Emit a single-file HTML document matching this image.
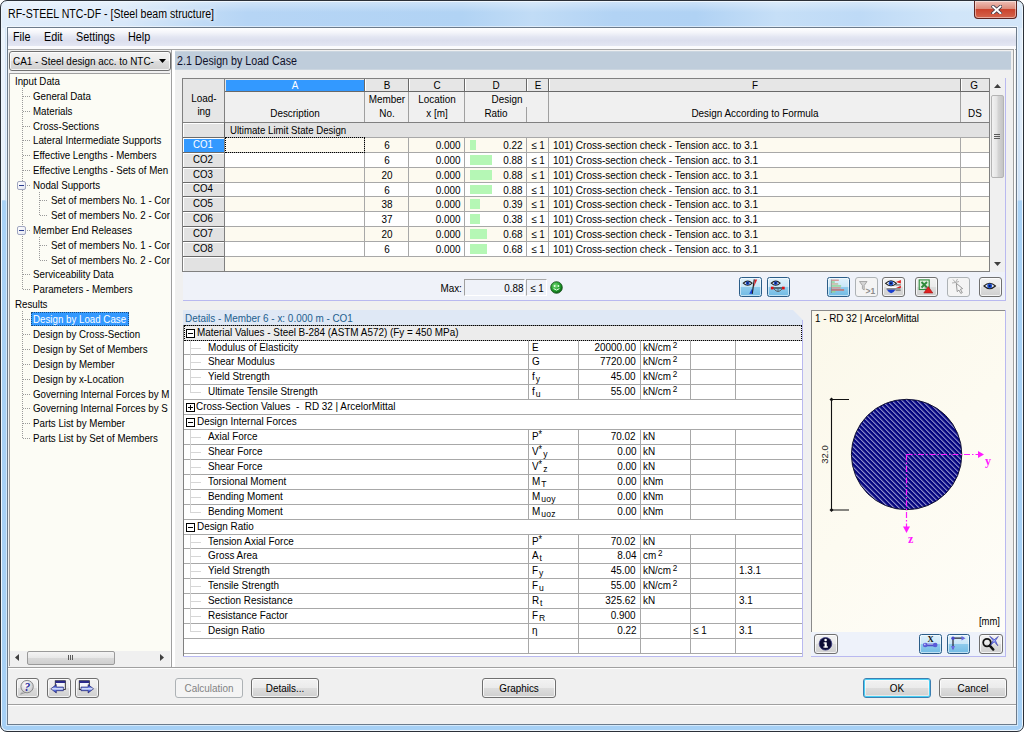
<!DOCTYPE html>
<html><head><meta charset="utf-8"><title>RF-STEEL NTC-DF</title>
<style>
html,body{margin:0;padding:0;background:#fff;}
body{width:1024px;height:732px;overflow:hidden;position:relative;font-family:"Liberation Sans",sans-serif;font-size:11px;color:#000;}
.t{position:absolute;white-space:nowrap;line-height:14px;height:14px;font-size:11px;display:block;}
.ui{font-size:12px;}
.w{color:#fff;}
.dis{color:#838383;}
.btn{position:absolute;box-sizing:border-box;border:1px solid #707070;border-radius:3px;background:linear-gradient(#f2f2f2 0%,#ebebeb 48%,#dddddd 52%,#cfcfcf 100%);box-shadow:inset 0 0 0 1px rgba(255,255,255,.75);}
.btnb{position:absolute;box-sizing:border-box;border:1px solid #2b5d88;border-radius:2.5px;background:linear-gradient(#dff1fb 0%,#c9e6f7 48%,#8fcbec 52%,#72bbe4 100%);box-shadow:inset 0 0 0 1px rgba(255,255,255,.55);}
.def{border-color:#3c7fb1;box-shadow:inset 0 0 0 1px #48d0f6, inset 0 0 0 2px rgba(255,255,255,.5);}
.btnd{position:absolute;box-sizing:border-box;border:1px solid #adb2b5;border-radius:3px;background:#f4f4f4;}
.hl{position:absolute;height:1px;background:#a0a0a0;}
.vl{position:absolute;width:1px;background:#a0a0a0;}
sub,sup{font-size:9.5px;line-height:0;margin-left:1px;letter-spacing:.3px;}sub{vertical-align:-2px;}sup{vertical-align:3px;font-size:9px;margin-left:2px;}sup.st{margin-left:0;font-size:10px;vertical-align:2px;}
</style></head><body>

<div class="" style="position:absolute;left:0px;top:0px;width:1024px;height:732px;box-sizing:border-box;border:1px solid #2b3038;border-radius:7px;background:linear-gradient(180deg,#d6e7f9 0px,#cfe2f7 199px,#a9d2f6 200px,#a6d0f5 100%);box-shadow:inset 0 0 0 1px #eef6fd;overflow:hidden;"><div style="position:absolute;left:1px;top:1px;width:1020px;height:26px;border-radius:6px 6px 0 0;background:linear-gradient(90deg,#e2eefb 0%,#d8e8f9 12%,#c2dcf6 19%,#b6d5f5 24%,#b1d3f4 45%,#c1dcf6 52%,#b2d3f4 60%,#b0d2f4 68%,#c6dff7 76%,#bedaf6 84%,#d0e5f9 93%,#d3e6f9 100%)"></div><div style="position:absolute;left:1px;top:1px;width:1020px;height:26px;border-radius:6px 6px 0 0;background:linear-gradient(180deg,rgba(255,255,255,.35) 0,rgba(255,255,255,0) 40%,rgba(255,255,255,0) 100%)"></div><div style="position:absolute;left:1px;top:27px;width:3px;height:172px;background:rgba(255,255,255,.55)"></div><div style="position:absolute;left:1019px;top:27px;width:3px;height:172px;background:rgba(255,255,255,.3)"></div></div>
<div class="" style="position:absolute;left:7px;top:27px;width:1010px;height:698px;box-sizing:border-box;border:1px solid #6c7b8b;background:#f0f0f0;box-shadow:0 0 0 1px rgba(255,255,255,.5);"></div>
<span class="t ui" style="left:8px;transform-origin:0 50%;top:7px;transform:scaleX(0.882);text-shadow:0 0 7px rgba(255,255,255,.9),0 0 4px rgba(255,255,255,.8);">RF-STEEL NTC-DF - [Steel beam structure]</span>
<div class="" style="position:absolute;left:974px;top:1px;width:43px;height:18px;box-sizing:border-box;border:1px solid #5c2320;border-top:none;border-radius:0 0 4px 4px;background:linear-gradient(#efc0b7 0%,#dc8c7c 45%,#cb432d 50%,#d4654d 100%);box-shadow:inset 0 0 0 1px rgba(255,255,255,.45);"></div>
<svg style="position:absolute;left:990.5px;top:4.5px" width="11.5" height="9.8" viewBox="0 0 14 12"><path d="M2.5 2 L11.5 10 M11.5 2 L2.5 10" stroke="#3a3a4a" stroke-width="4.2" stroke-linecap="square"/><path d="M2.5 2 L11.5 10 M11.5 2 L2.5 10" stroke="#fff" stroke-width="2.4" stroke-linecap="square"/></svg>
<div class="" style="position:absolute;left:8px;top:28px;width:1008px;height:18px;background:linear-gradient(#ffffff 0%,#f4f5fa 25%,#e3e6f2 50%,#dcdfee 70%,#e4e7f3 100%);"></div>
<div class="" style="position:absolute;left:8px;top:46px;width:1008px;height:3px;background:#fbfbfd;"></div>
<div class="" style="position:absolute;left:8px;top:49px;width:1008px;height:1px;background:#a5a5a5;"></div>
<span class="t ui" style="left:13px;transform-origin:0 50%;top:30px;transform:scaleX(0.9);">File</span>
<span class="t ui" style="left:44px;transform-origin:0 50%;top:30px;transform:scaleX(0.9);">Edit</span>
<span class="t ui" style="left:76px;transform-origin:0 50%;top:30px;transform:scaleX(0.9);">Settings</span>
<span class="t ui" style="left:128px;transform-origin:0 50%;top:30px;transform:scaleX(0.9);">Help</span>
<div class="" style="position:absolute;left:9px;top:51px;width:162px;height:20px;box-sizing:border-box;border:1px solid #707070;border-radius:3px;background:linear-gradient(#f2f2f2 0%,#ebebeb 48%,#dddddd 52%,#cfcfcf 100%);box-shadow:inset 0 0 0 1px rgba(255,255,255,.75);"></div>
<span class="t " style="left:13px;transform-origin:0 50%;top:54px;transform:scaleX(0.9);">CA1 - Steel design acc. to NTC-</span>
<svg style="position:absolute;left:159px;top:59px" width="8" height="5"><path d="M0 0 L7 0 L3.5 4 Z" fill="#000"/></svg>
<div class="" style="position:absolute;left:9px;top:73px;width:161px;height:593px;box-sizing:border-box;border-top:1px solid #a0a0a0;border-left:1px solid #a0a0a0;background:#fcfcf5;"></div>
<div class="" style="position:absolute;left:170px;top:73px;width:1px;height:593px;background:#fafafa;"></div>
<div style="position:absolute;left:10px;top:74px;width:160px;height:576px;overflow:hidden">
<div class="" style="position:absolute;left:12px;top:14px;width:1px;height:202px;background-image:linear-gradient(#9a9a9a 50%,transparent 50%);background-size:1px 2px;"></div>
<div class="" style="position:absolute;left:12px;top:237px;width:1px;height:128px;background-image:linear-gradient(#9a9a9a 50%,transparent 50%);background-size:1px 2px;"></div>
<div class="" style="position:absolute;left:29px;top:118px;width:1px;height:24px;background-image:linear-gradient(#9a9a9a 50%,transparent 50%);background-size:1px 2px;"></div>
<div class="" style="position:absolute;left:29px;top:163px;width:1px;height:24px;background-image:linear-gradient(#9a9a9a 50%,transparent 50%);background-size:1px 2px;"></div>
<span class="t" style="left:5px;top:-0.09999999999999432px;transform-origin:0 50%;transform:scaleX(0.885)">Input Data</span>
<div class="" style="position:absolute;left:13px;top:22px;width:8px;height:1px;background-image:linear-gradient(90deg,#9a9a9a 50%,transparent 50%);background-size:2px 1px;"></div>
<span class="t" style="left:23px;top:14.790000000000006px;transform-origin:0 50%;transform:scaleX(0.885)">General Data</span>
<div class="" style="position:absolute;left:13px;top:37px;width:8px;height:1px;background-image:linear-gradient(90deg,#9a9a9a 50%,transparent 50%);background-size:2px 1px;"></div>
<span class="t" style="left:23px;top:29.680000000000007px;transform-origin:0 50%;transform:scaleX(0.885)">Materials</span>
<div class="" style="position:absolute;left:13px;top:52px;width:8px;height:1px;background-image:linear-gradient(90deg,#9a9a9a 50%,transparent 50%);background-size:2px 1px;"></div>
<span class="t" style="left:23px;top:44.57000000000001px;transform-origin:0 50%;transform:scaleX(0.885)">Cross-Sections</span>
<div class="" style="position:absolute;left:13px;top:66px;width:8px;height:1px;background-image:linear-gradient(90deg,#9a9a9a 50%,transparent 50%);background-size:2px 1px;"></div>
<span class="t" style="left:23px;top:59.46000000000001px;transform-origin:0 50%;transform:scaleX(0.885)">Lateral Intermediate Supports</span>
<div class="" style="position:absolute;left:13px;top:81px;width:8px;height:1px;background-image:linear-gradient(90deg,#9a9a9a 50%,transparent 50%);background-size:2px 1px;"></div>
<span class="t" style="left:23px;top:74.35000000000002px;transform-origin:0 50%;transform:scaleX(0.885)">Effective Lengths - Members</span>
<div class="" style="position:absolute;left:13px;top:96px;width:8px;height:1px;background-image:linear-gradient(90deg,#9a9a9a 50%,transparent 50%);background-size:2px 1px;"></div>
<span class="t" style="left:23px;top:89.24000000000001px;transform-origin:0 50%;transform:scaleX(0.885)">Effective Lengths - Sets of Men</span>
<div class="" style="position:absolute;left:13px;top:111px;width:8px;height:1px;background-image:linear-gradient(90deg,#9a9a9a 50%,transparent 50%);background-size:2px 1px;"></div>
<span class="t" style="left:23px;top:104.13px;transform-origin:0 50%;transform:scaleX(0.885)">Nodal Supports</span>
<div class="" style="position:absolute;left:7px;top:107px;width:9px;height:9px;box-sizing:border-box;border:1px solid #a0a6c0;background:linear-gradient(135deg,#fff,#e4e6f0);border-radius:2px;"><div style="position:absolute;left:1px;top:3px;width:5px;height:1px;background:#2a3d8f"></div></div>
<div class="" style="position:absolute;left:30px;top:126px;width:8px;height:1px;background-image:linear-gradient(90deg,#9a9a9a 50%,transparent 50%);background-size:2px 1px;"></div>
<span class="t" style="left:41px;top:119.02000000000001px;transform-origin:0 50%;transform:scaleX(0.885)">Set of members No. 1 - Cor</span>
<div class="" style="position:absolute;left:30px;top:141px;width:8px;height:1px;background-image:linear-gradient(90deg,#9a9a9a 50%,transparent 50%);background-size:2px 1px;"></div>
<span class="t" style="left:41px;top:133.91px;transform-origin:0 50%;transform:scaleX(0.885)">Set of members No. 2 - Cor</span>
<div class="" style="position:absolute;left:13px;top:156px;width:8px;height:1px;background-image:linear-gradient(90deg,#9a9a9a 50%,transparent 50%);background-size:2px 1px;"></div>
<span class="t" style="left:23px;top:148.8px;transform-origin:0 50%;transform:scaleX(0.885)">Member End Releases</span>
<div class="" style="position:absolute;left:7px;top:152px;width:9px;height:9px;box-sizing:border-box;border:1px solid #a0a6c0;background:linear-gradient(135deg,#fff,#e4e6f0);border-radius:2px;"><div style="position:absolute;left:1px;top:3px;width:5px;height:1px;background:#2a3d8f"></div></div>
<div class="" style="position:absolute;left:30px;top:171px;width:8px;height:1px;background-image:linear-gradient(90deg,#9a9a9a 50%,transparent 50%);background-size:2px 1px;"></div>
<span class="t" style="left:41px;top:163.69000000000003px;transform-origin:0 50%;transform:scaleX(0.885)">Set of members No. 1 - Cor</span>
<div class="" style="position:absolute;left:30px;top:186px;width:8px;height:1px;background-image:linear-gradient(90deg,#9a9a9a 50%,transparent 50%);background-size:2px 1px;"></div>
<span class="t" style="left:41px;top:178.58000000000004px;transform-origin:0 50%;transform:scaleX(0.885)">Set of members No. 2 - Cor</span>
<div class="" style="position:absolute;left:13px;top:200px;width:8px;height:1px;background-image:linear-gradient(90deg,#9a9a9a 50%,transparent 50%);background-size:2px 1px;"></div>
<span class="t" style="left:23px;top:193.47000000000003px;transform-origin:0 50%;transform:scaleX(0.885)">Serviceability Data</span>
<div class="" style="position:absolute;left:13px;top:215px;width:8px;height:1px;background-image:linear-gradient(90deg,#9a9a9a 50%,transparent 50%);background-size:2px 1px;"></div>
<span class="t" style="left:23px;top:208.36px;transform-origin:0 50%;transform:scaleX(0.885)">Parameters - Members</span>
<span class="t" style="left:5px;top:223.25px;transform-origin:0 50%;transform:scaleX(0.885)">Results</span>
<div class="" style="position:absolute;left:13px;top:245px;width:8px;height:1px;background-image:linear-gradient(90deg,#9a9a9a 50%,transparent 50%);background-size:2px 1px;"></div>
<div class="" style="position:absolute;left:21px;top:238px;width:98px;height:14px;box-sizing:border-box;background:#3399ff;border:1px dotted #1a4d80;"></div>
<span class="t w" style="left:23px;top:238.14px;transform-origin:0 50%;transform:scaleX(0.885)">Design by Load Case</span>
<div class="" style="position:absolute;left:13px;top:260px;width:8px;height:1px;background-image:linear-gradient(90deg,#9a9a9a 50%,transparent 50%);background-size:2px 1px;"></div>
<span class="t" style="left:23px;top:253.02999999999997px;transform-origin:0 50%;transform:scaleX(0.885)">Design by Cross-Section</span>
<div class="" style="position:absolute;left:13px;top:275px;width:8px;height:1px;background-image:linear-gradient(90deg,#9a9a9a 50%,transparent 50%);background-size:2px 1px;"></div>
<span class="t" style="left:23px;top:267.91999999999996px;transform-origin:0 50%;transform:scaleX(0.885)">Design by Set of Members</span>
<div class="" style="position:absolute;left:13px;top:290px;width:8px;height:1px;background-image:linear-gradient(90deg,#9a9a9a 50%,transparent 50%);background-size:2px 1px;"></div>
<span class="t" style="left:23px;top:282.81000000000006px;transform-origin:0 50%;transform:scaleX(0.885)">Design by Member</span>
<div class="" style="position:absolute;left:13px;top:305px;width:8px;height:1px;background-image:linear-gradient(90deg,#9a9a9a 50%,transparent 50%);background-size:2px 1px;"></div>
<span class="t" style="left:23px;top:297.70000000000005px;transform-origin:0 50%;transform:scaleX(0.885)">Design by x-Location</span>
<div class="" style="position:absolute;left:13px;top:320px;width:8px;height:1px;background-image:linear-gradient(90deg,#9a9a9a 50%,transparent 50%);background-size:2px 1px;"></div>
<span class="t" style="left:23px;top:312.59000000000003px;transform-origin:0 50%;transform:scaleX(0.885)">Governing Internal Forces by M</span>
<div class="" style="position:absolute;left:13px;top:334px;width:8px;height:1px;background-image:linear-gradient(90deg,#9a9a9a 50%,transparent 50%);background-size:2px 1px;"></div>
<span class="t" style="left:23px;top:327.48px;transform-origin:0 50%;transform:scaleX(0.885)">Governing Internal Forces by S</span>
<div class="" style="position:absolute;left:13px;top:349px;width:8px;height:1px;background-image:linear-gradient(90deg,#9a9a9a 50%,transparent 50%);background-size:2px 1px;"></div>
<span class="t" style="left:23px;top:342.37px;transform-origin:0 50%;transform:scaleX(0.885)">Parts List by Member</span>
<div class="" style="position:absolute;left:13px;top:364px;width:8px;height:1px;background-image:linear-gradient(90deg,#9a9a9a 50%,transparent 50%);background-size:2px 1px;"></div>
<span class="t" style="left:23px;top:357.26px;transform-origin:0 50%;transform:scaleX(0.885)">Parts List by Set of Members</span>
</div>
<div class="" style="position:absolute;left:10px;top:651px;width:160px;height:15px;background:#f0f0f0;"></div>
<div class="" style="position:absolute;left:27px;top:651px;width:88px;height:14px;box-sizing:border-box;border:1px solid #9a9a9a;border-radius:2px;background:linear-gradient(#f4f4f4 0%,#e8e8e8 48%,#d9d9d9 52%,#cfcfcf 100%);"></div>
<div class="" style="position:absolute;left:68px;top:655px;width:1px;height:5px;background:#5a5a5a;"></div>
<div class="" style="position:absolute;left:70px;top:655px;width:1px;height:5px;background:#5a5a5a;"></div>
<div class="" style="position:absolute;left:72px;top:655px;width:1px;height:5px;background:#5a5a5a;"></div>
<svg style="position:absolute;left:15px;top:654px" width="5" height="8"><path d="M4 0 L4 7 L0 3.5 Z" fill="#404040"/></svg>
<svg style="position:absolute;left:160px;top:654px" width="5" height="8"><path d="M0 0 L0 7 L4 3.5 Z" fill="#404040"/></svg>
<div class="" style="position:absolute;left:171px;top:50px;width:1px;height:617px;background:#a0a0a0;"></div>
<div class="" style="position:absolute;left:172px;top:50px;width:3px;height:617px;background:#ffffff;"></div>
<div class="" style="position:absolute;left:175px;top:51px;width:836px;height:19px;background:linear-gradient(180deg,rgba(191,205,219,.5) 0,#bfcddb 1px,#bfcddb 18px,rgba(191,205,219,.5) 100%);"></div>
<span class="t ui" style="left:177px;transform-origin:0 50%;top:53.5px;transform:scaleX(0.89);color:#10102a;">2.1 Design by Load Case</span>
<div class="" style="position:absolute;left:1013px;top:49px;width:1px;height:618px;background:#a0a0a0;"></div>
<div class="" style="position:absolute;left:1014px;top:49px;width:1px;height:618px;background:#fff;"></div>
<div class="" style="position:absolute;left:183px;top:78px;width:823px;height:222px;background:#eff2f9;"></div>
<div class="" style="position:absolute;left:183px;top:300px;width:823px;height:1px;background:#b9b9f0;"></div>
<div class="" style="position:absolute;left:1005px;top:78px;width:1px;height:223px;background:#b9b9f0;"></div>
<div class="" style="position:absolute;left:182px;top:78px;width:808px;height:194px;background:#808080;"></div>
<div class="" style="position:absolute;left:183px;top:79px;width:806px;height:12px;background:#e6e6e6;"></div>
<div class="" style="position:absolute;left:183px;top:91px;width:806px;height:1px;background:#696969;"></div>
<div class="" style="position:absolute;left:183px;top:92px;width:806px;height:30px;background:#f0f0f0;"></div>
<div class="" style="position:absolute;left:183px;top:79px;width:41px;height:43px;background:#e6e6e6;"></div>
<div class="" style="position:absolute;left:226px;top:80px;width:138px;height:11px;background:#3399ff;"></div>
<span class="t w" style="left:145.0px;width:300px;text-align:center;transform-origin:50% 50%;top:77.7px;transform:scaleX(0.9);">A</span>
<span class="t " style="left:237.0px;width:300px;text-align:center;transform-origin:50% 50%;top:77.7px;transform:scaleX(0.9);">B</span>
<div class="" style="position:absolute;left:364px;top:79px;width:1px;height:12px;background:#696969;"></div>
<div class="" style="position:absolute;left:365px;top:79px;width:1px;height:12px;background:#ffffff;"></div>
<span class="t " style="left:287.0px;width:300px;text-align:center;transform-origin:50% 50%;top:77.7px;transform:scaleX(0.9);">C</span>
<div class="" style="position:absolute;left:408px;top:79px;width:1px;height:12px;background:#696969;"></div>
<div class="" style="position:absolute;left:409px;top:79px;width:1px;height:12px;background:#ffffff;"></div>
<span class="t " style="left:346.0px;width:300px;text-align:center;transform-origin:50% 50%;top:77.7px;transform:scaleX(0.9);">D</span>
<div class="" style="position:absolute;left:464px;top:79px;width:1px;height:12px;background:#696969;"></div>
<div class="" style="position:absolute;left:465px;top:79px;width:1px;height:12px;background:#ffffff;"></div>
<span class="t " style="left:388.0px;width:300px;text-align:center;transform-origin:50% 50%;top:77.7px;transform:scaleX(0.9);">E</span>
<div class="" style="position:absolute;left:526px;top:79px;width:1px;height:12px;background:#696969;"></div>
<div class="" style="position:absolute;left:527px;top:79px;width:1px;height:12px;background:#ffffff;"></div>
<span class="t " style="left:605.0px;width:300px;text-align:center;transform-origin:50% 50%;top:77.7px;transform:scaleX(0.9);">F</span>
<div class="" style="position:absolute;left:548px;top:79px;width:1px;height:12px;background:#696969;"></div>
<div class="" style="position:absolute;left:549px;top:79px;width:1px;height:12px;background:#ffffff;"></div>
<span class="t " style="left:824.0px;width:300px;text-align:center;transform-origin:50% 50%;top:77.7px;transform:scaleX(0.9);">G</span>
<div class="" style="position:absolute;left:960px;top:79px;width:1px;height:12px;background:#696969;"></div>
<div class="" style="position:absolute;left:961px;top:79px;width:1px;height:12px;background:#ffffff;"></div>
<div class="" style="position:absolute;left:224px;top:79px;width:1px;height:43px;background:#808080;"></div>
<div class="" style="position:absolute;left:364px;top:92px;width:1px;height:30px;background:#a0a0a0;"></div>
<div class="" style="position:absolute;left:408px;top:92px;width:1px;height:30px;background:#a0a0a0;"></div>
<div class="" style="position:absolute;left:464px;top:92px;width:1px;height:30px;background:#a0a0a0;"></div>
<div class="" style="position:absolute;left:526px;top:107px;width:1px;height:15px;background:#a0a0a0;"></div>
<div class="" style="position:absolute;left:548px;top:92px;width:1px;height:30px;background:#a0a0a0;"></div>
<div class="" style="position:absolute;left:960px;top:92px;width:1px;height:30px;background:#a0a0a0;"></div>
<span class="t " style="left:54px;width:300px;text-align:center;transform-origin:50% 50%;top:91px;transform:scaleX(0.9);">Load-</span>
<span class="t " style="left:54px;width:300px;text-align:center;transform-origin:50% 50%;top:103.7px;transform:scaleX(0.9);">ing</span>
<span class="t " style="left:145px;width:300px;text-align:center;transform-origin:50% 50%;top:105.8px;transform:scaleX(0.9);">Description</span>
<span class="t " style="left:237px;width:300px;text-align:center;transform-origin:50% 50%;top:91.5px;transform:scaleX(0.9);">Member</span>
<span class="t " style="left:237px;width:300px;text-align:center;transform-origin:50% 50%;top:105.8px;transform:scaleX(0.9);">No.</span>
<span class="t " style="left:287px;width:300px;text-align:center;transform-origin:50% 50%;top:91.5px;transform:scaleX(0.9);">Location</span>
<span class="t " style="left:287px;width:300px;text-align:center;transform-origin:50% 50%;top:105.8px;transform:scaleX(0.9);">x [m]</span>
<span class="t " style="left:357px;width:300px;text-align:center;transform-origin:50% 50%;top:91.5px;transform:scaleX(0.9);">Design</span>
<span class="t " style="left:345.5px;width:300px;text-align:center;transform-origin:50% 50%;top:105.8px;transform:scaleX(0.9);">Ratio</span>
<span class="t " style="left:605px;width:300px;text-align:center;transform-origin:50% 50%;top:105.8px;transform:scaleX(0.9);">Design According to Formula</span>
<span class="t " style="left:825px;width:300px;text-align:center;transform-origin:50% 50%;top:105.8px;transform:scaleX(0.9);">DS</span>
<div class="" style="position:absolute;left:183px;top:122px;width:806px;height:1px;background:#808080;"></div>
<div class="" style="position:absolute;left:183px;top:123px;width:806px;height:14px;background:#e2e2e2;"></div>
<span class="t " style="left:229.5px;transform-origin:0 50%;top:123.0px;transform:scaleX(0.876);">Ultimate Limit State Design</span>
<div class="" style="position:absolute;left:183px;top:123px;width:41px;height:14px;background:#e2e2e2;box-sizing:border-box;border-top:1px solid #fff;border-left:1px solid #fff;"></div>
<div class="" style="position:absolute;left:224px;top:122px;width:1px;height:15px;background:#696969;"></div>
<div class="" style="position:absolute;left:225px;top:138px;width:764px;height:14px;background:#fdfaf0;"></div>
<div class="" style="position:absolute;left:225px;top:137px;width:764px;height:1px;background:#a8a8a8;"></div>
<div class="" style="position:absolute;left:183px;top:137px;width:41px;height:1px;background:#6a6a6a;"></div>
<div class="" style="position:absolute;left:183px;top:138px;width:41px;height:14px;background:#3399ff;box-sizing:border-box;border-top:1px solid #fff;border-left:1px solid #fff;"></div>
<div class="" style="position:absolute;left:364px;top:138px;width:1px;height:14px;background:#a8a8a8;"></div>
<div class="" style="position:absolute;left:408px;top:138px;width:1px;height:14px;background:#a8a8a8;"></div>
<div class="" style="position:absolute;left:464px;top:138px;width:1px;height:14px;background:#a8a8a8;"></div>
<div class="" style="position:absolute;left:526px;top:138px;width:1px;height:14px;background:#a8a8a8;"></div>
<div class="" style="position:absolute;left:548px;top:138px;width:1px;height:14px;background:#a8a8a8;"></div>
<div class="" style="position:absolute;left:960px;top:138px;width:1px;height:14px;background:#a8a8a8;"></div>
<span class="t w" style="left:52.69999999999999px;width:300px;text-align:center;transform-origin:50% 50%;top:136.9px;transform:scaleX(0.88);">CO1</span>
<span class="t " style="left:237px;width:300px;text-align:center;transform-origin:50% 50%;top:138.0px;transform:scaleX(0.9);">6</span>
<span class="t " style="right:563px;transform-origin:100% 50%;top:138.0px;transform:scaleX(0.9);">0.000</span>
<div class="" style="position:absolute;left:470px;top:140px;width:6px;height:10px;background:#b5f7b5;"></div>
<span class="t " style="right:502px;transform-origin:100% 50%;top:138.0px;transform:scaleX(0.9);">0.22</span>
<span class="t " style="left:388px;width:300px;text-align:center;transform-origin:50% 50%;top:138.0px;transform:scaleX(0.9);">≤ 1</span>
<span class="t " style="left:553px;transform-origin:0 50%;top:138.0px;transform:scaleX(0.91);">101) Cross-section check - Tension acc. to 3.1</span>
<div class="" style="position:absolute;left:225px;top:153px;width:764px;height:14px;background:#ffffff;"></div>
<div class="" style="position:absolute;left:225px;top:152px;width:764px;height:1px;background:#a8a8a8;"></div>
<div class="" style="position:absolute;left:183px;top:152px;width:41px;height:1px;background:#6a6a6a;"></div>
<div class="" style="position:absolute;left:183px;top:153px;width:41px;height:14px;background:#e2e2e2;box-sizing:border-box;border-top:1px solid #fff;border-left:1px solid #fff;"></div>
<div class="" style="position:absolute;left:364px;top:153px;width:1px;height:14px;background:#a8a8a8;"></div>
<div class="" style="position:absolute;left:408px;top:153px;width:1px;height:14px;background:#a8a8a8;"></div>
<div class="" style="position:absolute;left:464px;top:153px;width:1px;height:14px;background:#a8a8a8;"></div>
<div class="" style="position:absolute;left:526px;top:153px;width:1px;height:14px;background:#a8a8a8;"></div>
<div class="" style="position:absolute;left:548px;top:153px;width:1px;height:14px;background:#a8a8a8;"></div>
<div class="" style="position:absolute;left:960px;top:153px;width:1px;height:14px;background:#a8a8a8;"></div>
<span class="t " style="left:52.69999999999999px;width:300px;text-align:center;transform-origin:50% 50%;top:151.9px;transform:scaleX(0.88);">CO2</span>
<span class="t " style="left:237px;width:300px;text-align:center;transform-origin:50% 50%;top:153.0px;transform:scaleX(0.9);">6</span>
<span class="t " style="right:563px;transform-origin:100% 50%;top:153.0px;transform:scaleX(0.9);">0.000</span>
<div class="" style="position:absolute;left:470px;top:155px;width:22px;height:10px;background:#b5f7b5;"></div>
<span class="t " style="right:502px;transform-origin:100% 50%;top:153.0px;transform:scaleX(0.9);">0.88</span>
<span class="t " style="left:388px;width:300px;text-align:center;transform-origin:50% 50%;top:153.0px;transform:scaleX(0.9);">≤ 1</span>
<span class="t " style="left:553px;transform-origin:0 50%;top:153.0px;transform:scaleX(0.91);">101) Cross-section check - Tension acc. to 3.1</span>
<div class="" style="position:absolute;left:225px;top:168px;width:764px;height:14px;background:#fdfaf0;"></div>
<div class="" style="position:absolute;left:225px;top:167px;width:764px;height:1px;background:#a8a8a8;"></div>
<div class="" style="position:absolute;left:183px;top:167px;width:41px;height:1px;background:#6a6a6a;"></div>
<div class="" style="position:absolute;left:183px;top:168px;width:41px;height:14px;background:#e2e2e2;box-sizing:border-box;border-top:1px solid #fff;border-left:1px solid #fff;"></div>
<div class="" style="position:absolute;left:364px;top:168px;width:1px;height:14px;background:#a8a8a8;"></div>
<div class="" style="position:absolute;left:408px;top:168px;width:1px;height:14px;background:#a8a8a8;"></div>
<div class="" style="position:absolute;left:464px;top:168px;width:1px;height:14px;background:#a8a8a8;"></div>
<div class="" style="position:absolute;left:526px;top:168px;width:1px;height:14px;background:#a8a8a8;"></div>
<div class="" style="position:absolute;left:548px;top:168px;width:1px;height:14px;background:#a8a8a8;"></div>
<div class="" style="position:absolute;left:960px;top:168px;width:1px;height:14px;background:#a8a8a8;"></div>
<span class="t " style="left:52.69999999999999px;width:300px;text-align:center;transform-origin:50% 50%;top:166.9px;transform:scaleX(0.88);">CO3</span>
<span class="t " style="left:237px;width:300px;text-align:center;transform-origin:50% 50%;top:168.0px;transform:scaleX(0.9);">20</span>
<span class="t " style="right:563px;transform-origin:100% 50%;top:168.0px;transform:scaleX(0.9);">0.000</span>
<div class="" style="position:absolute;left:470px;top:170px;width:22px;height:10px;background:#b5f7b5;"></div>
<span class="t " style="right:502px;transform-origin:100% 50%;top:168.0px;transform:scaleX(0.9);">0.88</span>
<span class="t " style="left:388px;width:300px;text-align:center;transform-origin:50% 50%;top:168.0px;transform:scaleX(0.9);">≤ 1</span>
<span class="t " style="left:553px;transform-origin:0 50%;top:168.0px;transform:scaleX(0.91);">101) Cross-section check - Tension acc. to 3.1</span>
<div class="" style="position:absolute;left:225px;top:183px;width:764px;height:13px;background:#ffffff;"></div>
<div class="" style="position:absolute;left:225px;top:182px;width:764px;height:1px;background:#a8a8a8;"></div>
<div class="" style="position:absolute;left:183px;top:182px;width:41px;height:1px;background:#6a6a6a;"></div>
<div class="" style="position:absolute;left:183px;top:183px;width:41px;height:13px;background:#e2e2e2;box-sizing:border-box;border-top:1px solid #fff;border-left:1px solid #fff;"></div>
<div class="" style="position:absolute;left:364px;top:183px;width:1px;height:13px;background:#a8a8a8;"></div>
<div class="" style="position:absolute;left:408px;top:183px;width:1px;height:13px;background:#a8a8a8;"></div>
<div class="" style="position:absolute;left:464px;top:183px;width:1px;height:13px;background:#a8a8a8;"></div>
<div class="" style="position:absolute;left:526px;top:183px;width:1px;height:13px;background:#a8a8a8;"></div>
<div class="" style="position:absolute;left:548px;top:183px;width:1px;height:13px;background:#a8a8a8;"></div>
<div class="" style="position:absolute;left:960px;top:183px;width:1px;height:13px;background:#a8a8a8;"></div>
<span class="t " style="left:52.69999999999999px;width:300px;text-align:center;transform-origin:50% 50%;top:181.4px;transform:scaleX(0.88);">CO4</span>
<span class="t " style="left:237px;width:300px;text-align:center;transform-origin:50% 50%;top:182.5px;transform:scaleX(0.9);">6</span>
<span class="t " style="right:563px;transform-origin:100% 50%;top:182.5px;transform:scaleX(0.9);">0.000</span>
<div class="" style="position:absolute;left:470px;top:185px;width:22px;height:9px;background:#b5f7b5;"></div>
<span class="t " style="right:502px;transform-origin:100% 50%;top:182.5px;transform:scaleX(0.9);">0.88</span>
<span class="t " style="left:388px;width:300px;text-align:center;transform-origin:50% 50%;top:182.5px;transform:scaleX(0.9);">≤ 1</span>
<span class="t " style="left:553px;transform-origin:0 50%;top:182.5px;transform:scaleX(0.91);">101) Cross-section check - Tension acc. to 3.1</span>
<div class="" style="position:absolute;left:225px;top:197px;width:764px;height:14px;background:#fdfaf0;"></div>
<div class="" style="position:absolute;left:225px;top:196px;width:764px;height:1px;background:#a8a8a8;"></div>
<div class="" style="position:absolute;left:183px;top:196px;width:41px;height:1px;background:#6a6a6a;"></div>
<div class="" style="position:absolute;left:183px;top:197px;width:41px;height:14px;background:#e2e2e2;box-sizing:border-box;border-top:1px solid #fff;border-left:1px solid #fff;"></div>
<div class="" style="position:absolute;left:364px;top:197px;width:1px;height:14px;background:#a8a8a8;"></div>
<div class="" style="position:absolute;left:408px;top:197px;width:1px;height:14px;background:#a8a8a8;"></div>
<div class="" style="position:absolute;left:464px;top:197px;width:1px;height:14px;background:#a8a8a8;"></div>
<div class="" style="position:absolute;left:526px;top:197px;width:1px;height:14px;background:#a8a8a8;"></div>
<div class="" style="position:absolute;left:548px;top:197px;width:1px;height:14px;background:#a8a8a8;"></div>
<div class="" style="position:absolute;left:960px;top:197px;width:1px;height:14px;background:#a8a8a8;"></div>
<span class="t " style="left:52.69999999999999px;width:300px;text-align:center;transform-origin:50% 50%;top:195.9px;transform:scaleX(0.88);">CO5</span>
<span class="t " style="left:237px;width:300px;text-align:center;transform-origin:50% 50%;top:197.0px;transform:scaleX(0.9);">38</span>
<span class="t " style="right:563px;transform-origin:100% 50%;top:197.0px;transform:scaleX(0.9);">0.000</span>
<div class="" style="position:absolute;left:470px;top:199px;width:10px;height:10px;background:#b5f7b5;"></div>
<span class="t " style="right:502px;transform-origin:100% 50%;top:197.0px;transform:scaleX(0.9);">0.39</span>
<span class="t " style="left:388px;width:300px;text-align:center;transform-origin:50% 50%;top:197.0px;transform:scaleX(0.9);">≤ 1</span>
<span class="t " style="left:553px;transform-origin:0 50%;top:197.0px;transform:scaleX(0.91);">101) Cross-section check - Tension acc. to 3.1</span>
<div class="" style="position:absolute;left:225px;top:212px;width:764px;height:14px;background:#ffffff;"></div>
<div class="" style="position:absolute;left:225px;top:211px;width:764px;height:1px;background:#a8a8a8;"></div>
<div class="" style="position:absolute;left:183px;top:211px;width:41px;height:1px;background:#6a6a6a;"></div>
<div class="" style="position:absolute;left:183px;top:212px;width:41px;height:14px;background:#e2e2e2;box-sizing:border-box;border-top:1px solid #fff;border-left:1px solid #fff;"></div>
<div class="" style="position:absolute;left:364px;top:212px;width:1px;height:14px;background:#a8a8a8;"></div>
<div class="" style="position:absolute;left:408px;top:212px;width:1px;height:14px;background:#a8a8a8;"></div>
<div class="" style="position:absolute;left:464px;top:212px;width:1px;height:14px;background:#a8a8a8;"></div>
<div class="" style="position:absolute;left:526px;top:212px;width:1px;height:14px;background:#a8a8a8;"></div>
<div class="" style="position:absolute;left:548px;top:212px;width:1px;height:14px;background:#a8a8a8;"></div>
<div class="" style="position:absolute;left:960px;top:212px;width:1px;height:14px;background:#a8a8a8;"></div>
<span class="t " style="left:52.69999999999999px;width:300px;text-align:center;transform-origin:50% 50%;top:210.9px;transform:scaleX(0.88);">CO6</span>
<span class="t " style="left:237px;width:300px;text-align:center;transform-origin:50% 50%;top:212.0px;transform:scaleX(0.9);">37</span>
<span class="t " style="right:563px;transform-origin:100% 50%;top:212.0px;transform:scaleX(0.9);">0.000</span>
<div class="" style="position:absolute;left:470px;top:214px;width:10px;height:10px;background:#b5f7b5;"></div>
<span class="t " style="right:502px;transform-origin:100% 50%;top:212.0px;transform:scaleX(0.9);">0.38</span>
<span class="t " style="left:388px;width:300px;text-align:center;transform-origin:50% 50%;top:212.0px;transform:scaleX(0.9);">≤ 1</span>
<span class="t " style="left:553px;transform-origin:0 50%;top:212.0px;transform:scaleX(0.91);">101) Cross-section check - Tension acc. to 3.1</span>
<div class="" style="position:absolute;left:225px;top:227px;width:764px;height:14px;background:#fdfaf0;"></div>
<div class="" style="position:absolute;left:225px;top:226px;width:764px;height:1px;background:#a8a8a8;"></div>
<div class="" style="position:absolute;left:183px;top:226px;width:41px;height:1px;background:#6a6a6a;"></div>
<div class="" style="position:absolute;left:183px;top:227px;width:41px;height:14px;background:#e2e2e2;box-sizing:border-box;border-top:1px solid #fff;border-left:1px solid #fff;"></div>
<div class="" style="position:absolute;left:364px;top:227px;width:1px;height:14px;background:#a8a8a8;"></div>
<div class="" style="position:absolute;left:408px;top:227px;width:1px;height:14px;background:#a8a8a8;"></div>
<div class="" style="position:absolute;left:464px;top:227px;width:1px;height:14px;background:#a8a8a8;"></div>
<div class="" style="position:absolute;left:526px;top:227px;width:1px;height:14px;background:#a8a8a8;"></div>
<div class="" style="position:absolute;left:548px;top:227px;width:1px;height:14px;background:#a8a8a8;"></div>
<div class="" style="position:absolute;left:960px;top:227px;width:1px;height:14px;background:#a8a8a8;"></div>
<span class="t " style="left:52.69999999999999px;width:300px;text-align:center;transform-origin:50% 50%;top:225.9px;transform:scaleX(0.88);">CO7</span>
<span class="t " style="left:237px;width:300px;text-align:center;transform-origin:50% 50%;top:227.0px;transform:scaleX(0.9);">20</span>
<span class="t " style="right:563px;transform-origin:100% 50%;top:227.0px;transform:scaleX(0.9);">0.000</span>
<div class="" style="position:absolute;left:470px;top:229px;width:17px;height:10px;background:#b5f7b5;"></div>
<span class="t " style="right:502px;transform-origin:100% 50%;top:227.0px;transform:scaleX(0.9);">0.68</span>
<span class="t " style="left:388px;width:300px;text-align:center;transform-origin:50% 50%;top:227.0px;transform:scaleX(0.9);">≤ 1</span>
<span class="t " style="left:553px;transform-origin:0 50%;top:227.0px;transform:scaleX(0.91);">101) Cross-section check - Tension acc. to 3.1</span>
<div class="" style="position:absolute;left:225px;top:242px;width:764px;height:14px;background:#ffffff;"></div>
<div class="" style="position:absolute;left:225px;top:241px;width:764px;height:1px;background:#a8a8a8;"></div>
<div class="" style="position:absolute;left:183px;top:241px;width:41px;height:1px;background:#6a6a6a;"></div>
<div class="" style="position:absolute;left:183px;top:242px;width:41px;height:14px;background:#e2e2e2;box-sizing:border-box;border-top:1px solid #fff;border-left:1px solid #fff;"></div>
<div class="" style="position:absolute;left:364px;top:242px;width:1px;height:14px;background:#a8a8a8;"></div>
<div class="" style="position:absolute;left:408px;top:242px;width:1px;height:14px;background:#a8a8a8;"></div>
<div class="" style="position:absolute;left:464px;top:242px;width:1px;height:14px;background:#a8a8a8;"></div>
<div class="" style="position:absolute;left:526px;top:242px;width:1px;height:14px;background:#a8a8a8;"></div>
<div class="" style="position:absolute;left:548px;top:242px;width:1px;height:14px;background:#a8a8a8;"></div>
<div class="" style="position:absolute;left:960px;top:242px;width:1px;height:14px;background:#a8a8a8;"></div>
<span class="t " style="left:52.69999999999999px;width:300px;text-align:center;transform-origin:50% 50%;top:240.9px;transform:scaleX(0.88);">CO8</span>
<span class="t " style="left:237px;width:300px;text-align:center;transform-origin:50% 50%;top:242.0px;transform:scaleX(0.9);">6</span>
<span class="t " style="right:563px;transform-origin:100% 50%;top:242.0px;transform:scaleX(0.9);">0.000</span>
<div class="" style="position:absolute;left:470px;top:244px;width:17px;height:10px;background:#b5f7b5;"></div>
<span class="t " style="right:502px;transform-origin:100% 50%;top:242.0px;transform:scaleX(0.9);">0.68</span>
<span class="t " style="left:388px;width:300px;text-align:center;transform-origin:50% 50%;top:242.0px;transform:scaleX(0.9);">≤ 1</span>
<span class="t " style="left:553px;transform-origin:0 50%;top:242.0px;transform:scaleX(0.91);">101) Cross-section check - Tension acc. to 3.1</span>
<div class="" style="position:absolute;left:225px;top:257px;width:764px;height:14px;background:#fdfaf0;"></div>
<div class="" style="position:absolute;left:225px;top:256px;width:764px;height:1px;background:#a8a8a8;"></div>
<div class="" style="position:absolute;left:183px;top:256px;width:41px;height:1px;background:#6a6a6a;"></div>
<div class="" style="position:absolute;left:183px;top:257px;width:41px;height:14px;background:#e2e2e2;box-sizing:border-box;border-top:1px solid #fff;border-left:1px solid #fff;"></div>
<div class="" style="position:absolute;left:183px;top:271px;width:806px;height:1px;background:#808080;"></div>
<div class="" style="position:absolute;left:225px;top:137px;width:140px;height:16px;box-sizing:border-box;border:1px dotted #000;"></div>
<div class="" style="position:absolute;left:990px;top:78px;width:15px;height:194px;background:#f0f0f0;"></div>
<div class="" style="position:absolute;left:991px;top:95px;width:13px;height:83px;box-sizing:border-box;border:1px solid #b4b4b4;border-radius:2px;background:linear-gradient(90deg,#f2f2f2 0%,#e4e4e4 45%,#d4d4d4 55%,#c4c4c4 100%);"></div>
<div class="" style="position:absolute;left:994px;top:134px;width:6px;height:1px;background:#5a5a5a;"></div>
<div class="" style="position:absolute;left:994px;top:136px;width:6px;height:1px;background:#5a5a5a;"></div>
<div class="" style="position:absolute;left:994px;top:138px;width:6px;height:1px;background:#5a5a5a;"></div>
<svg style="position:absolute;left:994px;top:84px" width="8" height="5"><path d="M0 4 L7 4 L3.5 0 Z" fill="#404040"/></svg>
<svg style="position:absolute;left:994px;top:262px" width="8" height="5"><path d="M0 0 L7 0 L3.5 4 Z" fill="#404040"/></svg>
<span class="t " style="right:562px;transform-origin:100% 50%;top:281px;transform:scaleX(0.9);">Max:</span>
<div class="" style="position:absolute;left:464px;top:279px;width:61px;height:17px;box-sizing:border-box;border:1px solid #fff;border-top-color:#a0a0a0;border-left-color:#a0a0a0;background:#eff2f9;"></div>
<span class="t " style="right:501px;transform-origin:100% 50%;top:281px;transform:scaleX(0.9);">0.88</span>
<div class="" style="position:absolute;left:526px;top:279px;width:21px;height:17px;box-sizing:border-box;border:1px solid #fff;border-top-color:#a8a8a8;border-left-color:#a8a8a8;background:#eff2f9;"></div>
<span class="t " style="left:387px;width:300px;text-align:center;transform-origin:50% 50%;top:281px;transform:scaleX(0.9);">≤ 1</span>
<svg style="position:absolute;left:550px;top:281px" width="13" height="13" viewBox="0 0 13 13">
<defs><radialGradient id="sg" cx="40%" cy="35%" r="70%"><stop offset="0" stop-color="#7be07b"/><stop offset="0.6" stop-color="#1f9a2a"/><stop offset="1" stop-color="#0b5a14"/></radialGradient></defs>
<circle cx="6.5" cy="6.5" r="5.8" fill="url(#sg)" stroke="#0a4a10" stroke-width="0.8"/>
<circle cx="4.6" cy="5" r="0.9" fill="#e8ffe8"/><circle cx="8.4" cy="5" r="0.9" fill="#e8ffe8"/>
<path d="M3.6 7.6 Q6.5 10.6 9.4 7.6" stroke="#e8ffe8" stroke-width="1" fill="none"/></svg>
<div class="btnb" style="left:739px;top:277px;width:23px;height:20px"><svg width="21" height="18" viewBox="0 0 21 18" style="position:absolute;left:0;top:0"><path d="M3.2600000000000007 5.1 Q7.7 1.0299999999999994 12.14 5.1 Q7.7 9.17 3.2600000000000007 5.1 Z" fill="#e9eef6" stroke="#222" stroke-width="1.1"/><circle cx="7.7" cy="5.1" r="1.924" fill="#1d4fd0"/><circle cx="7.7" cy="5.1" r="0.8140000000000001" fill="#0a1440"/><path d="M14.3 1.4 L12.2 15.8" stroke="#222" stroke-width="1.2"/><path d="M14.9 1.5 L17.2 1.5 L13.9 9 Z" fill="#e0202a"/><path d="M12.3 10.2 L12 15.7 L9.2 15.7 Z" fill="#1a3fd0"/></svg></div>
<div class="btnb" style="left:767px;top:277px;width:23px;height:20px"><svg width="21" height="18" viewBox="0 0 21 18" style="position:absolute;left:0;top:0"><path d="M3.2600000000000007 5.1 Q7.7 1.0299999999999994 12.14 5.1 Q7.7 9.17 3.2600000000000007 5.1 Z" fill="#e9eef6" stroke="#222" stroke-width="1.1"/><circle cx="7.7" cy="5.1" r="1.924" fill="#1d4fd0"/><circle cx="7.7" cy="5.1" r="0.8140000000000001" fill="#0a1440"/><path d="M4 10 L16 10" stroke="#222" stroke-width="1.1"/><path d="M6 11 Q10 16 14 11" stroke="#555" stroke-width="0.9" fill="none"/><path d="M10 10.5 L10 13.4" stroke="#555" stroke-width="0.8"/><rect x="2.9" y="8.7" width="2.7" height="2.7" fill="#e01010"/><rect x="14" y="8.7" width="2.7" height="2.7" fill="#e01010"/></svg></div>
<div class="btnb" style="left:827px;top:277px;width:23px;height:20px"><svg width="21" height="18" viewBox="0 0 21 18" style="position:absolute;left:0;top:0"><path d="M3.4 1.5 L3.4 15" stroke="#777" stroke-width="0.8"/><rect x="3.6" y="1.5" width="7.2" height="1.5" fill="#d69a9a"/><rect x="3.6" y="3.3" width="3.2" height="1.5" fill="#8fd69a"/><rect x="3.6" y="5.2" width="6.6" height="1.5" fill="#c8b8a0"/><rect x="3.6" y="7.2" width="9.5" height="1.5" fill="#8fd69a"/><rect x="3.6" y="9.1" width="9" height="1.5" fill="#d69a9a"/><rect x="3.6" y="11.1" width="12.5" height="1.7" fill="#c07878"/><rect x="3.6" y="13" width="3.8" height="1.5" fill="#8fd69a"/></svg></div>
<div class="btnd" style="left:855px;top:277px;width:23px;height:20px"><svg width="21" height="18" viewBox="0 0 21 18" style="position:absolute;left:0;top:0"><path d="M3.5 3.5 L11 3.5 L8.2 7.5 L8.2 12 L6.4 10.8 L6.4 7.5 Z" fill="#d4d4d4" stroke="#a0a0a0" stroke-width="0.9"/><text x="9.5" y="15.5" font-family="Liberation Sans, sans-serif" font-size="8.5" font-weight="bold" fill="#8c8c8c">&gt;1</text></svg></div>
<div class="btn" style="left:882px;top:277px;width:23px;height:20px"><svg width="21" height="18" viewBox="0 0 21 18" style="position:absolute;left:0;top:0"><path d="M3.7 11.6 L12.6 11.6 Q8.2 19 3.7 11.6 Z" fill="#1a3fd0"/><path d="M3.5 9.7 L17.5 9.7" stroke="#fff" stroke-width="1.6"/><path d="M3.5 10.9 L17.5 10.9" stroke="#555" stroke-width="1"/><path d="M12.5 6.9 L17.8 6.9" stroke="#777" stroke-width="1.3"/><path d="M12.5 12.4 L17.8 12.4" stroke="#888" stroke-width="1.3"/><path d="M13 3.9 L17.9 2 L17.9 5.6 Z" fill="#e02020"/><path d="M13 9.9 L17.9 7.8 L17.9 9.9 Z" fill="#e02020"/><path d="M2.5999999999999996 5.3 Q8 0.34999999999999964 13.4 5.3 Q8 10.25 2.5999999999999996 5.3 Z" fill="#e9eef6" stroke="#222" stroke-width="1.1"/><circle cx="8" cy="5.3" r="2.3400000000000003" fill="#1d4fd0"/><circle cx="8" cy="5.3" r="0.9900000000000001" fill="#0a1440"/></svg></div>
<div class="btn" style="left:915px;top:277px;width:23px;height:20px"><svg width="21" height="18" viewBox="0 0 21 18" style="position:absolute;left:0;top:0"><rect x="3.2" y="1.9" width="10" height="9.6" fill="#dfeedd" stroke="#2e8b3a" stroke-width="1.1"/><path d="M5.5 4 L11 9.5 M11 4 L5.5 9.5" stroke="#2e8b3a" stroke-width="1.9"/><path d="M8.5 10 L13 10" stroke="#777" stroke-width="1"/><path d="M12.3 8.6 L16.8 15 L7.8 15 Z" fill="#e02020" stroke="#a01818" stroke-width="0.6"/></svg></div>
<div class="btnd" style="left:947px;top:277px;width:23px;height:20px"><svg width="21" height="18" viewBox="0 0 21 18" style="position:absolute;left:0;top:0"><path d="M8.3 5.3 L14.6 10.6 L12.4 11.3 L14.3 14.6 L12.8 15.4 L10.9 12.1 L9.2 13.6 Z" fill="#f6f6f6" stroke="#8c8c8c" stroke-width="0.9"/><path d="M5 1.5 L7.5 4.5 M9.5 1 L7.5 4.5 M4 5 L7.5 4.5 M11 3.5 L7.5 4.5" stroke="#a8a8a8" stroke-width="0.9"/></svg></div>
<div class="btn" style="left:979px;top:277px;width:23px;height:20px"><svg width="21" height="18" viewBox="0 0 21 18" style="position:absolute;left:0;top:0"><path d="M3.9399999999999995 8 Q9.7 2.7200000000000006 15.459999999999999 8 Q9.7 13.28 3.9399999999999995 8 Z" fill="#e9eef6" stroke="#222" stroke-width="1.1"/><circle cx="9.7" cy="8" r="2.496" fill="#1d4fd0"/><circle cx="9.7" cy="8" r="1.056" fill="#0a1440"/></svg></div>
<svg style="position:absolute;left:183px;top:310px" width="620" height="16"><path d="M0 0 L610 0 L620 10 L620 16 L0 16 Z" fill="#dfe8f5"/></svg>
<span class="t " style="left:185px;transform-origin:0 50%;top:310.5px;transform:scaleX(0.9);color:#23608f;">Details - Member 6 - x: 0.000 m - CO1</span>
<div class="" style="position:absolute;left:802px;top:320px;width:1px;height:337px;background:#b9b9f0;"></div>
<div class="" style="position:absolute;left:183px;top:656px;width:620px;height:1px;background:#b9b9f0;"></div>
<div class="" style="position:absolute;left:183px;top:325px;width:619px;height:331px;background:#fff;"></div>
<div class="" style="position:absolute;left:183px;top:325px;width:619px;height:1px;background:#808080;"></div>
<div class="" style="position:absolute;left:183px;top:325px;width:1px;height:331px;background:#808080;"></div>
<div class="" style="position:absolute;left:184px;top:340px;width:618px;height:1px;background:#a8a8a8;"></div>
<div class="" style="position:absolute;left:184px;top:326px;width:618px;height:14px;background:#ececec;"></div>
<div class="" style="position:absolute;left:184px;top:325px;width:618px;height:16px;box-sizing:border-box;border:1px dotted #000;"></div>
<div class="" style="position:absolute;left:186px;top:329px;width:9px;height:9px;box-sizing:border-box;border:1px solid #000;background:#fff;"><div style="position:absolute;left:1px;top:3px;width:5px;height:1px;background:#000"></div></div>
<span class="t " style="left:197px;transform-origin:0 50%;top:325.1px;transform:scaleX(0.9);">Material Values - Steel B-284 (ASTM A572) (Fy = 450 MPa)</span>
<div class="" style="position:absolute;left:184px;top:354px;width:618px;height:1px;background:#a8a8a8;"></div>
<div class="" style="position:absolute;left:190px;top:341px;width:1px;height:14px;background:#d6d6d6;"></div>
<div class="" style="position:absolute;left:190px;top:348px;width:11px;height:1px;background:#d6d6d6;"></div>
<span class="t " style="left:208px;transform-origin:0 50%;top:339.6px;transform:scaleX(0.9);">Modulus of Elasticity</span>
<div class="" style="position:absolute;left:528px;top:341px;width:1px;height:13px;background:#a8a8a8;"></div>
<div class="" style="position:absolute;left:578px;top:341px;width:1px;height:13px;background:#a8a8a8;"></div>
<div class="" style="position:absolute;left:640px;top:341px;width:1px;height:13px;background:#a8a8a8;"></div>
<div class="" style="position:absolute;left:690px;top:341px;width:1px;height:13px;background:#a8a8a8;"></div>
<div class="" style="position:absolute;left:735px;top:341px;width:1px;height:13px;background:#a8a8a8;"></div>
<span class="t " style="left:532px;transform-origin:0 50%;top:339.6px;transform:scaleX(0.9);">E</span>
<span class="t " style="right:388px;transform-origin:100% 50%;top:339.6px;transform:scaleX(0.9);">20000.00</span>
<span class="t " style="left:643px;transform-origin:0 50%;top:339.6px;transform:scaleX(0.9);">kN/cm<sup>2</sup></span>
<div class="" style="position:absolute;left:184px;top:369px;width:618px;height:1px;background:#a8a8a8;"></div>
<div class="" style="position:absolute;left:190px;top:355px;width:1px;height:15px;background:#d6d6d6;"></div>
<div class="" style="position:absolute;left:190px;top:362px;width:11px;height:1px;background:#d6d6d6;"></div>
<span class="t " style="left:208px;transform-origin:0 50%;top:354.1px;transform:scaleX(0.9);">Shear Modulus</span>
<div class="" style="position:absolute;left:528px;top:355px;width:1px;height:14px;background:#a8a8a8;"></div>
<div class="" style="position:absolute;left:578px;top:355px;width:1px;height:14px;background:#a8a8a8;"></div>
<div class="" style="position:absolute;left:640px;top:355px;width:1px;height:14px;background:#a8a8a8;"></div>
<div class="" style="position:absolute;left:690px;top:355px;width:1px;height:14px;background:#a8a8a8;"></div>
<div class="" style="position:absolute;left:735px;top:355px;width:1px;height:14px;background:#a8a8a8;"></div>
<span class="t " style="left:532px;transform-origin:0 50%;top:354.1px;transform:scaleX(0.9);">G</span>
<span class="t " style="right:388px;transform-origin:100% 50%;top:354.1px;transform:scaleX(0.9);">7720.00</span>
<span class="t " style="left:643px;transform-origin:0 50%;top:354.1px;transform:scaleX(0.9);">kN/cm<sup>2</sup></span>
<div class="" style="position:absolute;left:184px;top:384px;width:618px;height:1px;background:#a8a8a8;"></div>
<div class="" style="position:absolute;left:190px;top:370px;width:1px;height:15px;background:#d6d6d6;"></div>
<div class="" style="position:absolute;left:190px;top:377px;width:11px;height:1px;background:#d6d6d6;"></div>
<span class="t " style="left:208px;transform-origin:0 50%;top:369.1px;transform:scaleX(0.9);">Yield Strength</span>
<div class="" style="position:absolute;left:528px;top:370px;width:1px;height:14px;background:#a8a8a8;"></div>
<div class="" style="position:absolute;left:578px;top:370px;width:1px;height:14px;background:#a8a8a8;"></div>
<div class="" style="position:absolute;left:640px;top:370px;width:1px;height:14px;background:#a8a8a8;"></div>
<div class="" style="position:absolute;left:690px;top:370px;width:1px;height:14px;background:#a8a8a8;"></div>
<div class="" style="position:absolute;left:735px;top:370px;width:1px;height:14px;background:#a8a8a8;"></div>
<span class="t " style="left:532px;transform-origin:0 50%;top:369.1px;transform:scaleX(0.9);">f<sub>y</sub></span>
<span class="t " style="right:388px;transform-origin:100% 50%;top:369.1px;transform:scaleX(0.9);">45.00</span>
<span class="t " style="left:643px;transform-origin:0 50%;top:369.1px;transform:scaleX(0.9);">kN/cm<sup>2</sup></span>
<div class="" style="position:absolute;left:184px;top:399px;width:618px;height:1px;background:#a8a8a8;"></div>
<div class="" style="position:absolute;left:190px;top:385px;width:1px;height:8px;background:#d6d6d6;"></div>
<div class="" style="position:absolute;left:190px;top:392px;width:11px;height:1px;background:#d6d6d6;"></div>
<span class="t " style="left:208px;transform-origin:0 50%;top:384.1px;transform:scaleX(0.9);">Ultimate Tensile Strength</span>
<div class="" style="position:absolute;left:528px;top:385px;width:1px;height:14px;background:#a8a8a8;"></div>
<div class="" style="position:absolute;left:578px;top:385px;width:1px;height:14px;background:#a8a8a8;"></div>
<div class="" style="position:absolute;left:640px;top:385px;width:1px;height:14px;background:#a8a8a8;"></div>
<div class="" style="position:absolute;left:690px;top:385px;width:1px;height:14px;background:#a8a8a8;"></div>
<div class="" style="position:absolute;left:735px;top:385px;width:1px;height:14px;background:#a8a8a8;"></div>
<span class="t " style="left:532px;transform-origin:0 50%;top:384.1px;transform:scaleX(0.9);">f<sub>u</sub></span>
<span class="t " style="right:388px;transform-origin:100% 50%;top:384.1px;transform:scaleX(0.9);">55.00</span>
<span class="t " style="left:643px;transform-origin:0 50%;top:384.1px;transform:scaleX(0.9);">kN/cm<sup>2</sup></span>
<div class="" style="position:absolute;left:184px;top:414px;width:618px;height:1px;background:#a8a8a8;"></div>
<div class="" style="position:absolute;left:186px;top:403px;width:9px;height:9px;box-sizing:border-box;border:1px solid #000;background:#fff;"><div style="position:absolute;left:1px;top:3px;width:5px;height:1px;background:#000"></div><div style="position:absolute;left:3px;top:1px;width:1px;height:5px;background:#000"></div></div>
<span class="t " style="left:196px;transform-origin:0 50%;top:399.1px;transform:scaleX(0.9);">Cross-Section Values &nbsp;- &nbsp;RD 32 | ArcelorMittal</span>
<div class="" style="position:absolute;left:184px;top:429px;width:618px;height:1px;background:#a8a8a8;"></div>
<div class="" style="position:absolute;left:186px;top:418px;width:9px;height:9px;box-sizing:border-box;border:1px solid #000;background:#fff;"><div style="position:absolute;left:1px;top:3px;width:5px;height:1px;background:#000"></div></div>
<span class="t " style="left:197px;transform-origin:0 50%;top:414.1px;transform:scaleX(0.9);">Design Internal Forces</span>
<div class="" style="position:absolute;left:184px;top:444px;width:618px;height:1px;background:#a8a8a8;"></div>
<div class="" style="position:absolute;left:190px;top:430px;width:1px;height:15px;background:#d6d6d6;"></div>
<div class="" style="position:absolute;left:190px;top:437px;width:11px;height:1px;background:#d6d6d6;"></div>
<span class="t " style="left:208px;transform-origin:0 50%;top:429.1px;transform:scaleX(0.9);">Axial Force</span>
<div class="" style="position:absolute;left:528px;top:430px;width:1px;height:14px;background:#a8a8a8;"></div>
<div class="" style="position:absolute;left:578px;top:430px;width:1px;height:14px;background:#a8a8a8;"></div>
<div class="" style="position:absolute;left:640px;top:430px;width:1px;height:14px;background:#a8a8a8;"></div>
<div class="" style="position:absolute;left:690px;top:430px;width:1px;height:14px;background:#a8a8a8;"></div>
<div class="" style="position:absolute;left:735px;top:430px;width:1px;height:14px;background:#a8a8a8;"></div>
<span class="t " style="left:532px;transform-origin:0 50%;top:429.1px;transform:scaleX(0.9);">P<sup class="st">*</sup></span>
<span class="t " style="right:388px;transform-origin:100% 50%;top:429.1px;transform:scaleX(0.9);">70.02</span>
<span class="t " style="left:643px;transform-origin:0 50%;top:429.1px;transform:scaleX(0.9);">kN</span>
<div class="" style="position:absolute;left:184px;top:459px;width:618px;height:1px;background:#a8a8a8;"></div>
<div class="" style="position:absolute;left:190px;top:445px;width:1px;height:15px;background:#d6d6d6;"></div>
<div class="" style="position:absolute;left:190px;top:452px;width:11px;height:1px;background:#d6d6d6;"></div>
<span class="t " style="left:208px;transform-origin:0 50%;top:444.1px;transform:scaleX(0.9);">Shear Force</span>
<div class="" style="position:absolute;left:528px;top:445px;width:1px;height:14px;background:#a8a8a8;"></div>
<div class="" style="position:absolute;left:578px;top:445px;width:1px;height:14px;background:#a8a8a8;"></div>
<div class="" style="position:absolute;left:640px;top:445px;width:1px;height:14px;background:#a8a8a8;"></div>
<div class="" style="position:absolute;left:690px;top:445px;width:1px;height:14px;background:#a8a8a8;"></div>
<div class="" style="position:absolute;left:735px;top:445px;width:1px;height:14px;background:#a8a8a8;"></div>
<span class="t " style="left:532px;transform-origin:0 50%;top:444.1px;transform:scaleX(0.9);">V<sup class="st">*</sup><sub>y</sub></span>
<span class="t " style="right:388px;transform-origin:100% 50%;top:444.1px;transform:scaleX(0.9);">0.00</span>
<span class="t " style="left:643px;transform-origin:0 50%;top:444.1px;transform:scaleX(0.9);">kN</span>
<div class="" style="position:absolute;left:184px;top:474px;width:618px;height:1px;background:#a8a8a8;"></div>
<div class="" style="position:absolute;left:190px;top:460px;width:1px;height:15px;background:#d6d6d6;"></div>
<div class="" style="position:absolute;left:190px;top:467px;width:11px;height:1px;background:#d6d6d6;"></div>
<span class="t " style="left:208px;transform-origin:0 50%;top:459.1px;transform:scaleX(0.9);">Shear Force</span>
<div class="" style="position:absolute;left:528px;top:460px;width:1px;height:14px;background:#a8a8a8;"></div>
<div class="" style="position:absolute;left:578px;top:460px;width:1px;height:14px;background:#a8a8a8;"></div>
<div class="" style="position:absolute;left:640px;top:460px;width:1px;height:14px;background:#a8a8a8;"></div>
<div class="" style="position:absolute;left:690px;top:460px;width:1px;height:14px;background:#a8a8a8;"></div>
<div class="" style="position:absolute;left:735px;top:460px;width:1px;height:14px;background:#a8a8a8;"></div>
<span class="t " style="left:532px;transform-origin:0 50%;top:459.1px;transform:scaleX(0.9);">V<sup class="st">*</sup><sub>z</sub></span>
<span class="t " style="right:388px;transform-origin:100% 50%;top:459.1px;transform:scaleX(0.9);">0.00</span>
<span class="t " style="left:643px;transform-origin:0 50%;top:459.1px;transform:scaleX(0.9);">kN</span>
<div class="" style="position:absolute;left:184px;top:489px;width:618px;height:1px;background:#a8a8a8;"></div>
<div class="" style="position:absolute;left:190px;top:475px;width:1px;height:15px;background:#d6d6d6;"></div>
<div class="" style="position:absolute;left:190px;top:482px;width:11px;height:1px;background:#d6d6d6;"></div>
<span class="t " style="left:208px;transform-origin:0 50%;top:474.1px;transform:scaleX(0.9);">Torsional Moment</span>
<div class="" style="position:absolute;left:528px;top:475px;width:1px;height:14px;background:#a8a8a8;"></div>
<div class="" style="position:absolute;left:578px;top:475px;width:1px;height:14px;background:#a8a8a8;"></div>
<div class="" style="position:absolute;left:640px;top:475px;width:1px;height:14px;background:#a8a8a8;"></div>
<div class="" style="position:absolute;left:690px;top:475px;width:1px;height:14px;background:#a8a8a8;"></div>
<div class="" style="position:absolute;left:735px;top:475px;width:1px;height:14px;background:#a8a8a8;"></div>
<span class="t " style="left:532px;transform-origin:0 50%;top:474.1px;transform:scaleX(0.9);">M<sub>T</sub></span>
<span class="t " style="right:388px;transform-origin:100% 50%;top:474.1px;transform:scaleX(0.9);">0.00</span>
<span class="t " style="left:643px;transform-origin:0 50%;top:474.1px;transform:scaleX(0.9);">kNm</span>
<div class="" style="position:absolute;left:184px;top:504px;width:618px;height:1px;background:#a8a8a8;"></div>
<div class="" style="position:absolute;left:190px;top:490px;width:1px;height:15px;background:#d6d6d6;"></div>
<div class="" style="position:absolute;left:190px;top:497px;width:11px;height:1px;background:#d6d6d6;"></div>
<span class="t " style="left:208px;transform-origin:0 50%;top:489.1px;transform:scaleX(0.9);">Bending Moment</span>
<div class="" style="position:absolute;left:528px;top:490px;width:1px;height:14px;background:#a8a8a8;"></div>
<div class="" style="position:absolute;left:578px;top:490px;width:1px;height:14px;background:#a8a8a8;"></div>
<div class="" style="position:absolute;left:640px;top:490px;width:1px;height:14px;background:#a8a8a8;"></div>
<div class="" style="position:absolute;left:690px;top:490px;width:1px;height:14px;background:#a8a8a8;"></div>
<div class="" style="position:absolute;left:735px;top:490px;width:1px;height:14px;background:#a8a8a8;"></div>
<span class="t " style="left:532px;transform-origin:0 50%;top:489.1px;transform:scaleX(0.9);">M<sub>uoy</sub></span>
<span class="t " style="right:388px;transform-origin:100% 50%;top:489.1px;transform:scaleX(0.9);">0.00</span>
<span class="t " style="left:643px;transform-origin:0 50%;top:489.1px;transform:scaleX(0.9);">kNm</span>
<div class="" style="position:absolute;left:184px;top:519px;width:618px;height:1px;background:#a8a8a8;"></div>
<div class="" style="position:absolute;left:190px;top:505px;width:1px;height:8px;background:#d6d6d6;"></div>
<div class="" style="position:absolute;left:190px;top:512px;width:11px;height:1px;background:#d6d6d6;"></div>
<span class="t " style="left:208px;transform-origin:0 50%;top:504.1px;transform:scaleX(0.9);">Bending Moment</span>
<div class="" style="position:absolute;left:528px;top:505px;width:1px;height:14px;background:#a8a8a8;"></div>
<div class="" style="position:absolute;left:578px;top:505px;width:1px;height:14px;background:#a8a8a8;"></div>
<div class="" style="position:absolute;left:640px;top:505px;width:1px;height:14px;background:#a8a8a8;"></div>
<div class="" style="position:absolute;left:690px;top:505px;width:1px;height:14px;background:#a8a8a8;"></div>
<div class="" style="position:absolute;left:735px;top:505px;width:1px;height:14px;background:#a8a8a8;"></div>
<span class="t " style="left:532px;transform-origin:0 50%;top:504.1px;transform:scaleX(0.9);">M<sub>uoz</sub></span>
<span class="t " style="right:388px;transform-origin:100% 50%;top:504.1px;transform:scaleX(0.9);">0.00</span>
<span class="t " style="left:643px;transform-origin:0 50%;top:504.1px;transform:scaleX(0.9);">kNm</span>
<div class="" style="position:absolute;left:184px;top:534px;width:618px;height:1px;background:#a8a8a8;"></div>
<div class="" style="position:absolute;left:186px;top:523px;width:9px;height:9px;box-sizing:border-box;border:1px solid #000;background:#fff;"><div style="position:absolute;left:1px;top:3px;width:5px;height:1px;background:#000"></div></div>
<span class="t " style="left:197px;transform-origin:0 50%;top:519.1px;transform:scaleX(0.9);">Design Ratio</span>
<div class="" style="position:absolute;left:184px;top:548px;width:618px;height:1px;background:#a8a8a8;"></div>
<div class="" style="position:absolute;left:190px;top:535px;width:1px;height:14px;background:#d6d6d6;"></div>
<div class="" style="position:absolute;left:190px;top:542px;width:11px;height:1px;background:#d6d6d6;"></div>
<span class="t " style="left:208px;transform-origin:0 50%;top:533.6px;transform:scaleX(0.9);">Tension Axial Force</span>
<div class="" style="position:absolute;left:528px;top:535px;width:1px;height:13px;background:#a8a8a8;"></div>
<div class="" style="position:absolute;left:578px;top:535px;width:1px;height:13px;background:#a8a8a8;"></div>
<div class="" style="position:absolute;left:640px;top:535px;width:1px;height:13px;background:#a8a8a8;"></div>
<div class="" style="position:absolute;left:690px;top:535px;width:1px;height:13px;background:#a8a8a8;"></div>
<div class="" style="position:absolute;left:735px;top:535px;width:1px;height:13px;background:#a8a8a8;"></div>
<span class="t " style="left:532px;transform-origin:0 50%;top:533.6px;transform:scaleX(0.9);">P<sup class="st">*</sup></span>
<span class="t " style="right:388px;transform-origin:100% 50%;top:533.6px;transform:scaleX(0.9);">70.02</span>
<span class="t " style="left:643px;transform-origin:0 50%;top:533.6px;transform:scaleX(0.9);">kN</span>
<div class="" style="position:absolute;left:184px;top:563px;width:618px;height:1px;background:#a8a8a8;"></div>
<div class="" style="position:absolute;left:190px;top:549px;width:1px;height:15px;background:#d6d6d6;"></div>
<div class="" style="position:absolute;left:190px;top:556px;width:11px;height:1px;background:#d6d6d6;"></div>
<span class="t " style="left:208px;transform-origin:0 50%;top:548.1px;transform:scaleX(0.9);">Gross Area</span>
<div class="" style="position:absolute;left:528px;top:549px;width:1px;height:14px;background:#a8a8a8;"></div>
<div class="" style="position:absolute;left:578px;top:549px;width:1px;height:14px;background:#a8a8a8;"></div>
<div class="" style="position:absolute;left:640px;top:549px;width:1px;height:14px;background:#a8a8a8;"></div>
<div class="" style="position:absolute;left:690px;top:549px;width:1px;height:14px;background:#a8a8a8;"></div>
<div class="" style="position:absolute;left:735px;top:549px;width:1px;height:14px;background:#a8a8a8;"></div>
<span class="t " style="left:532px;transform-origin:0 50%;top:548.1px;transform:scaleX(0.9);">A<sub>t</sub></span>
<span class="t " style="right:388px;transform-origin:100% 50%;top:548.1px;transform:scaleX(0.9);">8.04</span>
<span class="t " style="left:643px;transform-origin:0 50%;top:548.1px;transform:scaleX(0.9);">cm<sup>2</sup></span>
<div class="" style="position:absolute;left:184px;top:578px;width:618px;height:1px;background:#a8a8a8;"></div>
<div class="" style="position:absolute;left:190px;top:564px;width:1px;height:15px;background:#d6d6d6;"></div>
<div class="" style="position:absolute;left:190px;top:571px;width:11px;height:1px;background:#d6d6d6;"></div>
<span class="t " style="left:208px;transform-origin:0 50%;top:563.1px;transform:scaleX(0.9);">Yield Strength</span>
<div class="" style="position:absolute;left:528px;top:564px;width:1px;height:14px;background:#a8a8a8;"></div>
<div class="" style="position:absolute;left:578px;top:564px;width:1px;height:14px;background:#a8a8a8;"></div>
<div class="" style="position:absolute;left:640px;top:564px;width:1px;height:14px;background:#a8a8a8;"></div>
<div class="" style="position:absolute;left:690px;top:564px;width:1px;height:14px;background:#a8a8a8;"></div>
<div class="" style="position:absolute;left:735px;top:564px;width:1px;height:14px;background:#a8a8a8;"></div>
<span class="t " style="left:532px;transform-origin:0 50%;top:563.1px;transform:scaleX(0.9);">F<sub>y</sub></span>
<span class="t " style="right:388px;transform-origin:100% 50%;top:563.1px;transform:scaleX(0.9);">45.00</span>
<span class="t " style="left:643px;transform-origin:0 50%;top:563.1px;transform:scaleX(0.9);">kN/cm<sup>2</sup></span>
<span class="t " style="left:739px;transform-origin:0 50%;top:563.1px;transform:scaleX(0.9);">1.3.1</span>
<div class="" style="position:absolute;left:184px;top:593px;width:618px;height:1px;background:#a8a8a8;"></div>
<div class="" style="position:absolute;left:190px;top:579px;width:1px;height:15px;background:#d6d6d6;"></div>
<div class="" style="position:absolute;left:190px;top:586px;width:11px;height:1px;background:#d6d6d6;"></div>
<span class="t " style="left:208px;transform-origin:0 50%;top:578.1px;transform:scaleX(0.9);">Tensile Strength</span>
<div class="" style="position:absolute;left:528px;top:579px;width:1px;height:14px;background:#a8a8a8;"></div>
<div class="" style="position:absolute;left:578px;top:579px;width:1px;height:14px;background:#a8a8a8;"></div>
<div class="" style="position:absolute;left:640px;top:579px;width:1px;height:14px;background:#a8a8a8;"></div>
<div class="" style="position:absolute;left:690px;top:579px;width:1px;height:14px;background:#a8a8a8;"></div>
<div class="" style="position:absolute;left:735px;top:579px;width:1px;height:14px;background:#a8a8a8;"></div>
<span class="t " style="left:532px;transform-origin:0 50%;top:578.1px;transform:scaleX(0.9);">F<sub>u</sub></span>
<span class="t " style="right:388px;transform-origin:100% 50%;top:578.1px;transform:scaleX(0.9);">55.00</span>
<span class="t " style="left:643px;transform-origin:0 50%;top:578.1px;transform:scaleX(0.9);">kN/cm<sup>2</sup></span>
<div class="" style="position:absolute;left:184px;top:608px;width:618px;height:1px;background:#a8a8a8;"></div>
<div class="" style="position:absolute;left:190px;top:594px;width:1px;height:15px;background:#d6d6d6;"></div>
<div class="" style="position:absolute;left:190px;top:601px;width:11px;height:1px;background:#d6d6d6;"></div>
<span class="t " style="left:208px;transform-origin:0 50%;top:593.1px;transform:scaleX(0.9);">Section Resistance</span>
<div class="" style="position:absolute;left:528px;top:594px;width:1px;height:14px;background:#a8a8a8;"></div>
<div class="" style="position:absolute;left:578px;top:594px;width:1px;height:14px;background:#a8a8a8;"></div>
<div class="" style="position:absolute;left:640px;top:594px;width:1px;height:14px;background:#a8a8a8;"></div>
<div class="" style="position:absolute;left:690px;top:594px;width:1px;height:14px;background:#a8a8a8;"></div>
<div class="" style="position:absolute;left:735px;top:594px;width:1px;height:14px;background:#a8a8a8;"></div>
<span class="t " style="left:532px;transform-origin:0 50%;top:593.1px;transform:scaleX(0.9);">R<sub>t</sub></span>
<span class="t " style="right:388px;transform-origin:100% 50%;top:593.1px;transform:scaleX(0.9);">325.62</span>
<span class="t " style="left:643px;transform-origin:0 50%;top:593.1px;transform:scaleX(0.9);">kN</span>
<span class="t " style="left:739px;transform-origin:0 50%;top:593.1px;transform:scaleX(0.9);">3.1</span>
<div class="" style="position:absolute;left:184px;top:623px;width:618px;height:1px;background:#a8a8a8;"></div>
<div class="" style="position:absolute;left:190px;top:609px;width:1px;height:15px;background:#d6d6d6;"></div>
<div class="" style="position:absolute;left:190px;top:616px;width:11px;height:1px;background:#d6d6d6;"></div>
<span class="t " style="left:208px;transform-origin:0 50%;top:608.1px;transform:scaleX(0.9);">Resistance Factor</span>
<div class="" style="position:absolute;left:528px;top:609px;width:1px;height:14px;background:#a8a8a8;"></div>
<div class="" style="position:absolute;left:578px;top:609px;width:1px;height:14px;background:#a8a8a8;"></div>
<div class="" style="position:absolute;left:640px;top:609px;width:1px;height:14px;background:#a8a8a8;"></div>
<div class="" style="position:absolute;left:690px;top:609px;width:1px;height:14px;background:#a8a8a8;"></div>
<div class="" style="position:absolute;left:735px;top:609px;width:1px;height:14px;background:#a8a8a8;"></div>
<span class="t " style="left:532px;transform-origin:0 50%;top:608.1px;transform:scaleX(0.9);">F<sub>R</sub></span>
<span class="t " style="right:388px;transform-origin:100% 50%;top:608.1px;transform:scaleX(0.9);">0.900</span>
<span class="t " style="left:643px;transform-origin:0 50%;top:608.1px;transform:scaleX(0.9);"></span>
<div class="" style="position:absolute;left:184px;top:638px;width:618px;height:1px;background:#a8a8a8;"></div>
<div class="" style="position:absolute;left:190px;top:624px;width:1px;height:8px;background:#d6d6d6;"></div>
<div class="" style="position:absolute;left:190px;top:631px;width:11px;height:1px;background:#d6d6d6;"></div>
<span class="t " style="left:208px;transform-origin:0 50%;top:623.1px;transform:scaleX(0.9);">Design Ratio</span>
<div class="" style="position:absolute;left:528px;top:624px;width:1px;height:14px;background:#a8a8a8;"></div>
<div class="" style="position:absolute;left:578px;top:624px;width:1px;height:14px;background:#a8a8a8;"></div>
<div class="" style="position:absolute;left:640px;top:624px;width:1px;height:14px;background:#a8a8a8;"></div>
<div class="" style="position:absolute;left:690px;top:624px;width:1px;height:14px;background:#a8a8a8;"></div>
<div class="" style="position:absolute;left:735px;top:624px;width:1px;height:14px;background:#a8a8a8;"></div>
<span class="t " style="left:532px;transform-origin:0 50%;top:623.1px;transform:scaleX(0.9);">&eta;</span>
<span class="t " style="right:388px;transform-origin:100% 50%;top:623.1px;transform:scaleX(0.9);">0.22</span>
<span class="t " style="left:643px;transform-origin:0 50%;top:623.1px;transform:scaleX(0.9);"></span>
<span class="t " style="left:693px;transform-origin:0 50%;top:623.1px;transform:scaleX(0.9);">≤ 1</span>
<span class="t " style="left:739px;transform-origin:0 50%;top:623.1px;transform:scaleX(0.9);">3.1</span>
<div class="" style="position:absolute;left:184px;top:653px;width:618px;height:1px;background:#a8a8a8;"></div>
<div class="" style="position:absolute;left:528px;top:639px;width:1px;height:14px;background:#a8a8a8;"></div>
<div class="" style="position:absolute;left:578px;top:639px;width:1px;height:14px;background:#a8a8a8;"></div>
<div class="" style="position:absolute;left:640px;top:639px;width:1px;height:14px;background:#a8a8a8;"></div>
<div class="" style="position:absolute;left:690px;top:639px;width:1px;height:14px;background:#a8a8a8;"></div>
<div class="" style="position:absolute;left:735px;top:639px;width:1px;height:14px;background:#a8a8a8;"></div>
<div class="" style="position:absolute;left:811px;top:310px;width:195px;height:347px;background:#eef2fa;"></div>
<div class="" style="position:absolute;left:1005px;top:310px;width:1px;height:347px;background:#b9b9f0;"></div>
<div class="" style="position:absolute;left:811px;top:656px;width:195px;height:1px;background:#b9b9f0;"></div>
<div class="" style="position:absolute;left:811px;top:310px;width:194px;height:322px;box-sizing:border-box;border-top:1px solid #8a8a8a;border-left:1px solid #8a8a8a;background:linear-gradient(135deg,#fbf8ea 0%,#fdfbf1 50%,#fefdf8 100%);"></div>
<svg style="position:absolute;left:811px;top:310px" width="194" height="322" viewBox="811 310 194 322" font-family="Liberation Sans, sans-serif">
<defs><pattern id="hat" width="3.54" height="3.54" patternUnits="userSpaceOnUse" patternTransform="rotate(-45)"><rect width="3.54" height="3.54" fill="#04047e"/><rect width="1.05" height="3.54" fill="#9a9ad4"/></pattern></defs>
<text x="815" y="322.4" font-size="11" textLength="104" lengthAdjust="spacingAndGlyphs">1 - RD 32 | ArcelorMittal</text>
<circle cx="906.6" cy="454.5" r="55.2" fill="url(#hat)" stroke="#101030" stroke-width="1"/>
<path d="M831.5 399.5 L831.5 510 M831 399.5 L849 399.5 M831 510 L849 510" stroke="#111" stroke-width="1.1" fill="none"/>
<path d="M831.5 397.5 L833.5 399.5 L831.5 401.5 L829.5 399.5 Z M831.5 508 L833.5 510 L831.5 512 L829.5 510 Z" fill="#111"/>
<text transform="translate(827.5 454.5) rotate(-90)" font-size="9.5" text-anchor="middle" fill="#222">32.0</text>
<path d="M906.5 454.5 L978 454.5" stroke="#ff1aff" stroke-width="1.2" stroke-dasharray="6 2 1.5 2"/>
<path d="M906.5 454.5 L906.5 527" stroke="#ff1aff" stroke-width="1.2" stroke-dasharray="6 2 1.5 2"/>
<path d="M978 451 L984 454.5 L978 458 Z" fill="#ff1aff"/>
<path d="M903 526.5 L910 526.5 L906.5 533 Z" fill="#ff1aff"/>
<text x="985" y="465" font-family="Liberation Serif, serif" font-weight="bold" font-size="12" fill="#ff1aff">y</text>
<text x="908" y="543" font-family="Liberation Serif, serif" font-weight="bold" font-size="12" fill="#ff1aff">z</text>
<text x="979" y="625" font-size="11" textLength="21" lengthAdjust="spacingAndGlyphs">[mm]</text>
</svg>
<div class="btn" style="left:814px;top:634px;width:24px;height:20px"><svg width="22" height="18" viewBox="0 0 22 18" style="position:absolute;left:0;top:0"><circle cx="10.5" cy="8.8" r="6.3" fill="#0c0c34" stroke="#3a3a80" stroke-width="0.8"/><rect x="9.6" y="7.4" width="2.2" height="5" fill="#fff"/><rect x="8.6" y="7.4" width="2" height="1.2" fill="#fff"/><rect x="8.4" y="11.4" width="4.6" height="1.2" fill="#fff"/><circle cx="10.6" cy="5" r="1.3" fill="#fff"/></svg></div>
<div class="btnb" style="left:919px;top:634px;width:23px;height:20px"><svg width="21" height="18" viewBox="0 0 21 18" style="position:absolute;left:0;top:0"><text x="10.5" y="7" text-anchor="middle" font-family="Liberation Serif, serif" font-weight="bold" font-size="8.5" fill="#111">X</text><path d="M5 10 L15.5 10" stroke="#5050c8" stroke-width="2.6"/><path d="M5 9.4 L15.5 9.4" stroke="#b0b0f0" stroke-width="0.8"/><circle cx="5.2" cy="10" r="2.3" fill="#5a5ad8"/><circle cx="15.2" cy="10" r="2.3" fill="#5a5ad8"/><circle cx="4.8" cy="9.4" r="0.9" fill="#c0c0f8"/></svg></div>
<div class="btnb" style="left:947px;top:634px;width:23px;height:20px"><svg width="21" height="18" viewBox="0 0 21 18" style="position:absolute;left:0;top:0"><path d="M5 14 L5 3.2 L15.5 3.2" stroke="#223" stroke-width="1.2" fill="none"/><path d="M13.5 1 L17.5 3.2 L13.5 5.4 Z" fill="#6a6ae0"/><path d="M3 11 L5 15.5 L7 11 Z" fill="#6a6ae0"/><circle cx="5" cy="3.2" r="1.7" fill="#4a4ac8"/></svg></div>
<div class="btn" style="left:979px;top:634px;width:24px;height:20px"><svg width="22" height="18" viewBox="0 0 22 18" style="position:absolute;left:0;top:0"><circle cx="7" cy="7.6" r="3.8" fill="none" stroke="#111" stroke-width="1.8"/><path d="M9.8 10.6 L13.3 14.6" stroke="#111" stroke-width="2.4" stroke-linecap="round"/><path d="M9.5 1 L14.3 4.6 L18.5 1.2 L15.6 5.6 L18 11 L14.3 7 L10.2 10.5 L13 5.6 Z" fill="#4a5ae0" stroke="#2a2a90" stroke-width="0.4"/><path d="M12 3.5 L14.3 5.2 L16.5 3.5 L15 5.7 L16.2 8.2 L14.3 6.3 L12.3 8 L13.6 5.7 Z" fill="#aab4ff"/></svg></div>
<div class="" style="position:absolute;left:8px;top:667px;width:1008px;height:1px;background:#a0a0a0;"></div>
<div class="" style="position:absolute;left:8px;top:668px;width:1008px;height:1px;background:#fff;"></div>
<div class="" style="position:absolute;left:8px;top:704px;width:1008px;height:1px;background:#a0a0a0;"></div>
<div class="" style="position:absolute;left:8px;top:705px;width:1008px;height:1px;background:#fff;"></div>
<svg width="0" height="0" style="position:absolute"><defs><linearGradient id="ag" x1="0" y1="0" x2="0" y2="1"><stop offset="0" stop-color="#1a2cb0"/><stop offset="0.3" stop-color="#5a70e0"/><stop offset="0.5" stop-color="#e8f0ff"/><stop offset="0.7" stop-color="#5a70e0"/><stop offset="1" stop-color="#1a2cb0"/></linearGradient><radialGradient id="hg" cx="40%" cy="35%" r="70%"><stop offset="0" stop-color="#ffffff"/><stop offset="1" stop-color="#c4c4c8"/></radialGradient></defs></svg>
<div class="btn" style="left:16px;top:678px;width:23px;height:20px"><svg width="21" height="18" viewBox="0 0 21 18" style="position:absolute;left:0;top:0"><path d="M6 12.5 L3.5 15.2 L8.2 13.6 Z" fill="#d8d8dc" stroke="#8a8a8a" stroke-width="0.7"/><circle cx="10.1" cy="7.6" r="6.2" fill="url(#hg)" stroke="#8a8a8a" stroke-width="1"/><text x="7.6" y="11.6" font-family="Liberation Serif, serif" font-weight="bold" font-style="italic" font-size="11.5" fill="#2a2aa0">?</text></svg></div>
<div class="btn" style="left:47px;top:678px;width:24px;height:20px"><svg width="22" height="18" viewBox="0 0 22 18" style="position:absolute;left:0;top:0"><rect x="7.3" y="1.8" width="10" height="8.6" fill="#f4f6fb" stroke="#222" stroke-width="0.9"/><rect x="7.3" y="1.8" width="10" height="2.2" fill="#2a2a8a"/><path d="M2.8 9.8 L8.3 5.6 L8.3 8 L15.4 8 L15.4 11.7 L8.3 11.7 L8.3 14 Z" fill="url(#ag)" stroke="#1a1a60" stroke-width="0.6"/></svg></div>
<div class="btn" style="left:75px;top:678px;width:24px;height:20px"><svg width="22" height="18" viewBox="0 0 22 18" style="position:absolute;left:0;top:0"><rect x="3.3" y="1.8" width="10" height="8.6" fill="#f4f6fb" stroke="#222" stroke-width="0.9"/><rect x="3.3" y="1.8" width="10" height="2.2" fill="#2a2a8a"/><path d="M17.6 9.8 L12.1 5.6 L12.1 8 L5 8 L5 11.7 L12.1 11.7 L12.1 14 Z" fill="url(#ag)" stroke="#1a1a60" stroke-width="0.6"/></svg></div>
<div class="btnd" style="left:175px;top:678px;width:68px;height:20px"></div>
<span class="t dis" style="left:59.0px;width:300px;text-align:center;transform-origin:50% 50%;top:681px;transform:scaleX(0.9);">Calculation</span>
<div class="btn" style="left:251px;top:678px;width:68px;height:20px"></div>
<span class="t " style="left:135.0px;width:300px;text-align:center;transform-origin:50% 50%;top:681px;transform:scaleX(0.9);">Details...</span>
<div class="btn" style="left:482px;top:678px;width:74px;height:20px"></div>
<span class="t " style="left:369.0px;width:300px;text-align:center;transform-origin:50% 50%;top:681px;transform:scaleX(0.9);">Graphics</span>
<div class="btn def" style="left:863px;top:678px;width:68px;height:20px"></div>
<span class="t " style="left:747.0px;width:300px;text-align:center;transform-origin:50% 50%;top:681px;transform:scaleX(0.9);">OK</span>
<div class="btn" style="left:939px;top:678px;width:68px;height:20px"></div>
<span class="t " style="left:823.0px;width:300px;text-align:center;transform-origin:50% 50%;top:681px;transform:scaleX(0.9);">Cancel</span>
</body></html>
